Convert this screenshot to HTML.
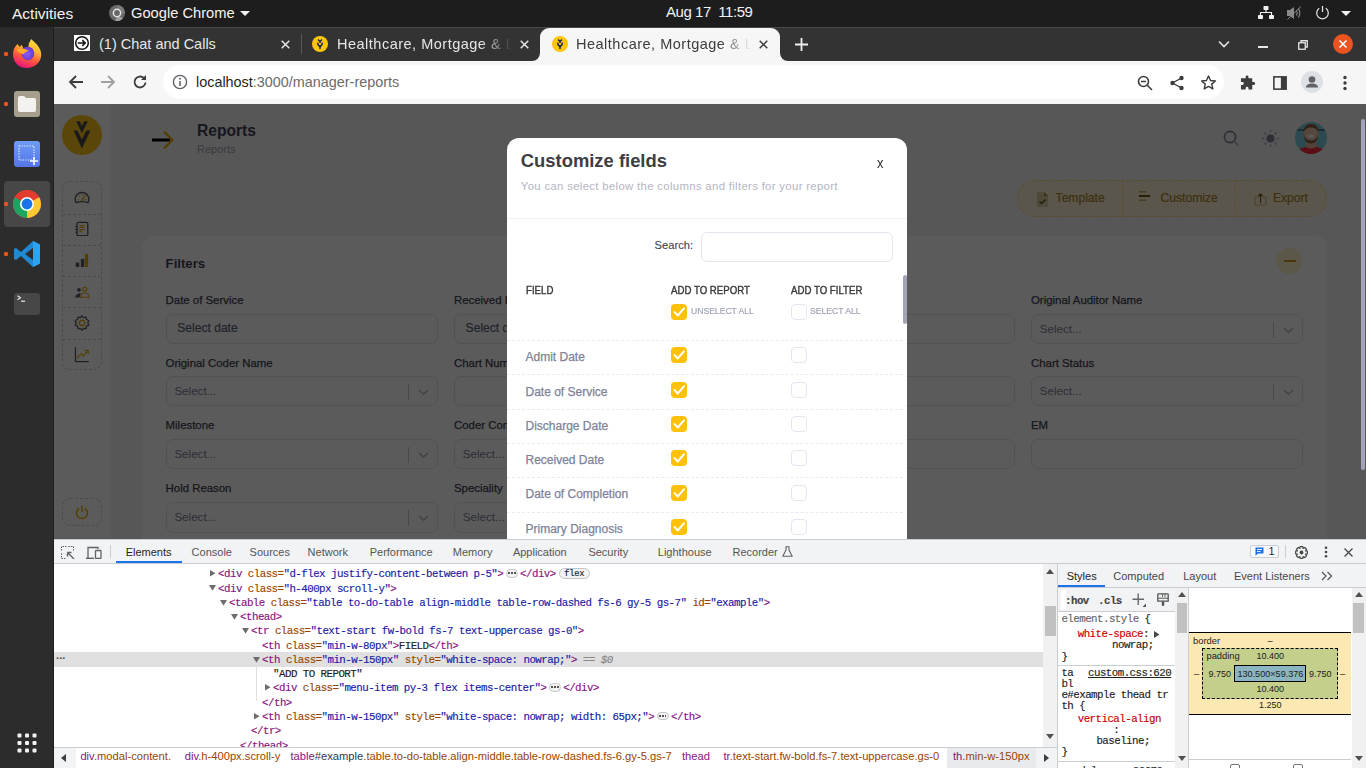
<!DOCTYPE html>
<html><head><meta charset="utf-8">
<style>
*{box-sizing:border-box;margin:0;padding:0}
html,body{width:1366px;height:768px;overflow:hidden;background:#1d1d1d;font-family:"Liberation Sans",sans-serif}
.a{position:absolute}
#topbar{left:0;top:0;width:1366px;height:27px;background:#1d1d1d;color:#fff;font-size:15px}
#dock{left:0;top:27px;width:54px;height:741px;background:#2c2c2c}
#tabs{left:54px;top:27px;width:1312px;height:34px;background:#333}
#toolbar{left:54px;top:61px;width:1312px;height:43px;background:#f6f6f6}
#page{left:54px;top:104px;width:1312px;height:435px;background:#f2f2f2;overflow:hidden}
#overlay{left:0;top:0;width:1312px;height:435px;background:rgba(0,0,0,0.643)}
.tabt{font-size:14.5px}
.tabx{font-size:13px}
.t{position:absolute;line-height:1;white-space:nowrap}
.m{position:absolute;font-family:"Liberation Mono",monospace;font-size:10.8px;letter-spacing:-0.54px;line-height:14px;white-space:nowrap;-webkit-text-stroke:0.15px currentColor}
.m span{-webkit-text-stroke:0.15px currentColor}
.ell{display:inline-block;box-sizing:border-box;width:12.5px;height:8.5px;border:1px solid #c4c4c4;border-radius:5px;background:#f1f3f4;vertical-align:middle;margin:0 2px 0 2.4px;position:relative;top:-1px;line-height:6px;text-align:center;font-size:0}
.ell i{display:inline-block;width:1.8px;height:1.8px;background:#555;margin:0 0.5px;vertical-align:middle}
.badge{display:inline-block;box-sizing:border-box;margin-left:3.2px;width:30.6px;height:11.3px;border:1px solid #c4c4c4;border-radius:6px;background:#f1f3f4;font-size:8.8px;letter-spacing:-0.3px;line-height:11px;text-align:center;color:#222;vertical-align:middle;position:relative;top:-1px}
#dev{left:54px;top:538px;width:1312px;height:230px;background:#fff;border-top:1px solid #cbcdd1}
</style></head><body>
<div id="topbar" class="a">
  <div class="a" style="left:12px;top:5px;font-size:15.5px;color:#f2f2f2">Activities</div>
  <svg class="a" style="left:109px;top:5px" width="16" height="16" viewBox="0 0 16 16"><circle cx="8" cy="8" r="8" fill="#6a6a6a"/><path d="M14 13.3A8 8 0 0 1 6 15.8L9.2 11Z" fill="#a0a0a0"/><path d="M8 0A8 8 0 0 1 15.8 9L12 8Z" fill="#7c7c7c"/><circle cx="8" cy="8" r="4.4" fill="#e6e6e6"/><circle cx="8" cy="8" r="2.9" fill="#666"/></svg>
  <div class="a" style="left:131px;top:4.5px;font-size:14.7px;color:#f2f2f2">Google Chrome</div>
  <svg class="a" style="left:240px;top:11px" width="10" height="5" viewBox="0 0 10 5"><path d="M0 0H10L5 5Z" fill="#f2f2f2"/></svg>
  <div class="a" style="left:666px;top:3px;font-size:15px;letter-spacing:-0.45px;color:#f2f2f2">Aug 17&nbsp; 11:59</div>
  <svg class="a" style="left:1258px;top:6px" width="16" height="13" viewBox="0 0 16 13"><rect x="5.5" y="0" width="5" height="4" rx="0.8" fill="#f2f2f2"/><rect x="0" y="9" width="5" height="4" rx="0.8" fill="#f2f2f2"/><rect x="11" y="9" width="5" height="4" rx="0.8" fill="#f2f2f2"/><path d="M8 4V6.5M2.5 9V6.5H13.5V9" stroke="#f2f2f2" stroke-width="1.1" fill="none"/></svg>
  <svg class="a" style="left:1287px;top:6px" width="16" height="14" viewBox="0 0 16 14"><path d="M0 4H3L7 1V13L3 10H0Z" fill="#8a8a8a"/><path d="M9.5 4.5Q11 7 9.5 9.5M11.5 2.5Q14 7 11.5 11.5" stroke="#8a8a8a" stroke-width="1.1" fill="none"/><path d="M0.5 13.5L14 0.5" stroke="#8a8a8a" stroke-width="1"/></svg>
  <svg class="a" style="left:1315px;top:5px" width="15" height="15" viewBox="0 0 15 15"><path d="M4.2 3.3A5.8 5.8 0 1 0 10.8 3.3" stroke="#eaeaea" stroke-width="1.2" fill="none"/><path d="M7.5 1V7" stroke="#eaeaea" stroke-width="1.2"/></svg>
  <svg class="a" style="left:1341px;top:11px" width="10" height="5" viewBox="0 0 10 5"><path d="M0 0H10L5 5Z" fill="#f2f2f2"/></svg>
</div>
<div id="dock" class="a">
  <div class="a" style="left:4px;top:154px;width:46px;height:46px;border-radius:4px;background:#474747"></div>
  <div class="a" style="left:53px;top:0;width:1px;height:741px;background:#1e1e1e"></div>
  <svg class="a" style="left:3px;top:24px" width="6" height="6"><circle cx="3" cy="3" r="2.2" fill="#e95420"/></svg>
  <svg class="a" style="left:3px;top:74px" width="6" height="6"><circle cx="3" cy="3" r="2.2" fill="#e95420"/></svg>
  <svg class="a" style="left:3px;top:174px" width="6" height="6"><circle cx="3" cy="3" r="2.2" fill="#e95420"/></svg>
  <svg class="a" style="left:3px;top:224px" width="6" height="6"><circle cx="3" cy="3" r="2.2" fill="#e95420"/></svg>
  <!-- firefox -->
  <svg class="a" style="left:12px;top:12px" width="30" height="30" viewBox="0 0 30 30">
    <defs><linearGradient id="ff1" x1="0.75" y1="0" x2="0.35" y2="1"><stop offset="0" stop-color="#ffe640"/><stop offset="0.35" stop-color="#ffb62e"/><stop offset="0.65" stop-color="#ff5a3a"/><stop offset="1" stop-color="#e8127e"/></linearGradient>
    <radialGradient id="ff2" cx="0.45" cy="0.55" r="0.6"><stop offset="0" stop-color="#8a5cf6"/><stop offset="1" stop-color="#6236c8"/></radialGradient></defs>
    <path d="M14.5 29C6.5 29 1 23 1 15.5C1 11 2.5 7.8 5.6 5L7.6 8L9.6 5.7L11.5 9.5L16 8C17 7 16.8 6 16.6 5C17.5 3.5 18.5 1.5 19 0C22 3 25 5 27 8.5C29 11.5 29.2 14 29.2 16C29.2 23 22.5 29 14.5 29Z" fill="url(#ff1)"/>
    <path d="M10.5 9.8C13 7.3 17.5 7 20.5 9.5L21.5 11.5A6.4 6.4 0 1 1 9.6 14Z" fill="url(#ff2)"/>
    <path d="M4.5 11C8 9.2 13 9.5 16.5 11.8C14 12.6 12.6 13.6 12 15.2C9.5 14.8 6.5 13.5 4.5 11Z" fill="#ffab2a"/>
  </svg>
  <!-- files -->
  <svg class="a" style="left:14px;top:64px" width="26" height="26" viewBox="0 0 26 26"><rect x="0" y="0" width="26" height="26" rx="3" fill="#a59f8c"/><path d="M4 7Q4 5 6 5H10L12 7H20Q22 7 22 9V19Q22 21 20 21H6Q4 21 4 19Z" fill="#f4f2ee"/></svg>
  <!-- screenshot -->
  <svg class="a" style="left:14px;top:114px" width="26" height="26" viewBox="0 0 26 26"><defs><linearGradient id="ss" x1="0" y1="0" x2="0" y2="1"><stop offset="0" stop-color="#6d9cf5"/><stop offset="1" stop-color="#5575e8"/></linearGradient></defs><rect width="26" height="26" rx="3" fill="url(#ss)"/><rect x="5" y="5" width="15" height="14" fill="none" stroke="#e6eeff" stroke-width="1.2" stroke-dasharray="1.3 1.3"/><path d="M20 16V24M16 20H24" stroke="#fff" stroke-width="1.6"/></svg>
  <!-- chrome selected bg -->
  <svg class="a" style="left:12px;top:162px" width="30" height="30" viewBox="0 0 30 30">
    <circle cx="15" cy="15" r="14" fill="#db4437"/>
    <path d="M15 15 L27.12 8 A14 14 0 0 1 15 29 Z" fill="#fcc934"/>
    <path d="M15 15 L15 29 A14 14 0 0 1 2.88 8 Z" fill="#1ea362"/>
    <path d="M15 15L2.88 8A14 14 0 0 1 27.12 8Z" fill="#e33b2e"/>
    <circle cx="15" cy="15" r="7" fill="#fff"/><circle cx="15" cy="15" r="5.4" fill="#1a73e8"/>
  </svg>
  <!-- vscode -->
  <svg class="a" style="left:13px;top:213px" width="28" height="28" viewBox="0 0 28 28"><path d="M20 1L27 4.5V23.5L20 27L8 16L3 20L1 19V9L3 8L8 12Z M20 8L12 14L20 20Z" fill="#1f8ad2" fill-rule="evenodd"/><path d="M20 1L27 4.5V23.5L20 27Z" fill="#2aa3f0"/></svg>
  <!-- terminal -->
  <svg class="a" style="left:14px;top:266px" width="26" height="22" viewBox="0 0 26 22"><rect width="26" height="22" rx="3" fill="#474747"/><path d="M3.5 2.8L6.5 4.8L3.5 6.8" stroke="#e8e8e8" stroke-width="1.1" fill="none"/><path d="M7 8.2H11" stroke="#e8e8e8" stroke-width="1.2"/></svg>
  <!-- apps -->
  <svg class="a" style="left:17px;top:706px" width="20" height="20" viewBox="0 0 20 20" fill="#f2f2f2"><rect x="0.5" y="0.5" width="4" height="4" rx="1"/><rect x="8" y="0.5" width="4" height="4" rx="1"/><rect x="15.5" y="0.5" width="4" height="4" rx="1"/><rect x="0.5" y="8" width="4" height="4" rx="1"/><rect x="8" y="8" width="4" height="4" rx="1"/><rect x="15.5" y="8" width="4" height="4" rx="1"/><rect x="0.5" y="15.5" width="4" height="4" rx="1"/><rect x="8" y="15.5" width="4" height="4" rx="1"/><rect x="15.5" y="15.5" width="4" height="4" rx="1"/></svg>
</div>
<div id="tabs" class="a">
  <div class="a" style="left:0;top:0;width:1312px;height:1px;background:#474747"></div>
  <!-- tab 1 -->
  <svg class="a" style="left:20px;top:8px" width="16" height="16" viewBox="0 0 16 16"><rect width="16" height="16" fill="#fff"/><circle cx="8" cy="8" r="6.3" fill="none" stroke="#111" stroke-width="1.5"/><path d="M3.8 8H11.2M8.3 5.1L11.2 8L8.3 10.9" stroke="#111" stroke-width="1.5" fill="none"/></svg>
  <div class="a tabt" style="left:45px;top:9px;color:#e6e6e6">(1) Chat and Calls</div>
  <svg class="a" style="left:227px;top:13px" width="9" height="9" viewBox="0 0 9 9"><path d="M0.7 0.7L8.3 8.3M8.3 0.7L0.7 8.3" stroke="#e6e6e6" stroke-width="1.5"/></svg>
  <div class="a" style="left:247px;top:7px;width:1px;height:20px;background:#5a5a5a"></div>
  <!-- tab 2 -->
  <svg class="a" style="left:258px;top:9px" width="16" height="16" viewBox="0 0 16 16"><circle cx="8" cy="8" r="8" fill="#ffc50a"/><path d="M6.1 3.6L8 5.6L9.9 3.6M8 5V7" stroke="#1d2a58" stroke-width="1.5" fill="none"/><path d="M5.6 6.6Q5.8 9.6 8 10.2Q10.2 9.6 10.4 6.6" stroke="#1d2a58" stroke-width="1.5" fill="none"/><rect x="7.2" y="9.5" width="1.6" height="3.4" fill="#1d2a58"/></svg>
  <div class="a tabt" style="left:283px;top:9px;width:175px;letter-spacing:0.5px;overflow:hidden;white-space:nowrap;color:#e6e6e6;-webkit-mask-image:linear-gradient(90deg,#000 82%,transparent 100%)">Healthcare, Mortgage &amp; Lending</div>
  <svg class="a" style="left:466px;top:13px" width="9" height="9" viewBox="0 0 9 9"><path d="M0.7 0.7L8.3 8.3M8.3 0.7L0.7 8.3" stroke="#e6e6e6" stroke-width="1.5"/></svg>
  <!-- active tab -->
  <div class="a" style="left:486px;top:1px;width:240px;height:33px;background:#f6f6f6;border-radius:9px 9px 0 0"></div>
  <svg class="a" style="left:478px;top:26px" width="8" height="8"><path d="M8 0V8H0A8 8 0 0 0 8 0Z" fill="#f6f6f6"/></svg>
  <svg class="a" style="left:726px;top:26px" width="8" height="8"><path d="M0 0V8H8A8 8 0 0 1 0 0Z" fill="#f6f6f6"/></svg>
  <svg class="a" style="left:498px;top:9px" width="16" height="16" viewBox="0 0 16 16"><circle cx="8" cy="8" r="8" fill="#ffc50a"/><path d="M6.1 3.6L8 5.6L9.9 3.6M8 5V7" stroke="#1d2a58" stroke-width="1.5" fill="none"/><path d="M5.6 6.6Q5.8 9.6 8 10.2Q10.2 9.6 10.4 6.6" stroke="#1d2a58" stroke-width="1.5" fill="none"/><rect x="7.2" y="9.5" width="1.6" height="3.4" fill="#1d2a58"/></svg>
  <div class="a tabt" style="left:522px;top:9px;width:175px;letter-spacing:0.5px;overflow:hidden;white-space:nowrap;color:#3c3c3c;-webkit-mask-image:linear-gradient(90deg,#000 82%,transparent 100%)">Healthcare, Mortgage &amp; Lending</div>
  <svg class="a" style="left:705px;top:13px" width="9" height="9" viewBox="0 0 9 9"><path d="M0.7 0.7L8.3 8.3M8.3 0.7L0.7 8.3" stroke="#3c3c3c" stroke-width="1.5"/></svg>
  <!-- plus -->
  <svg class="a" style="left:741px;top:11px" width="13" height="13" viewBox="0 0 13 13"><path d="M6.5 0V13M0 6.5H13" stroke="#f0f0f0" stroke-width="1.8"/></svg>
  <!-- right controls -->
  <svg class="a" style="left:1164px;top:13px" width="12" height="8" viewBox="0 0 12 8"><path d="M1 1.5L6 6.5L11 1.5" stroke="#e6e6e6" stroke-width="1.6" fill="none"/></svg>
  <div class="a" style="left:1204px;top:19px;width:10px;height:1.5px;background:#e6e6e6"></div>
  <svg class="a" style="left:1244px;top:13px" width="10" height="10" viewBox="0 0 10 10"><rect x="0.75" y="2.75" width="6.5" height="6.5" fill="none" stroke="#e6e6e6" stroke-width="1.3"/><path d="M3 2.5V0.75H9.25V7H7.5" fill="none" stroke="#e6e6e6" stroke-width="1.3"/></svg>
  <svg class="a" style="left:1279px;top:7px" width="20" height="20" viewBox="0 0 20 20"><circle cx="10" cy="10" r="10" fill="#e95420"/><path d="M6.5 6.5L13.5 13.5M13.5 6.5L6.5 13.5" stroke="#fff" stroke-width="1.6"/></svg>
</div>
<div id="toolbar" class="a">
  <svg class="a" style="left:14px;top:13px" width="16" height="16" viewBox="0 0 16 16"><path d="M15 8H2M8 2L2 8L8 14" stroke="#3c3c3c" stroke-width="1.8" fill="none"/></svg>
  <svg class="a" style="left:46px;top:13px" width="16" height="16" viewBox="0 0 16 16"><path d="M1 8H14M8 2L14 8L8 14" stroke="#a0a0a0" stroke-width="1.8" fill="none"/></svg>
  <svg class="a" style="left:78px;top:13px" width="16" height="16" viewBox="0 0 16 16"><path d="M13.5 8.5A5.5 5.5 0 1 1 11.8 4" stroke="#3c3c3c" stroke-width="1.8" fill="none"/><path d="M14 1V6H9Z" fill="#3c3c3c"/></svg>
  <div class="a" style="left:109px;top:4px;width:1061px;height:34px;background:#fff;border-radius:17px"></div>
  <svg class="a" style="left:118px;top:13px" width="16" height="16" viewBox="0 0 16 16"><circle cx="8" cy="8" r="6.6" fill="none" stroke="#5f6368" stroke-width="1.4"/><path d="M8 7V12" stroke="#5f6368" stroke-width="1.6"/><circle cx="8" cy="4.8" r="1" fill="#5f6368"/></svg>
  <div class="a" style="left:142px;top:13.2px;font-size:14.4px;color:#1f1f1f;white-space:nowrap">localhost<span style="color:#6b6b6b">:3000/manager-reports</span></div>
  <svg class="a" style="left:1083px;top:14px" width="16" height="16" viewBox="0 0 16 16"><circle cx="6.5" cy="6.5" r="5" fill="none" stroke="#3c3c3c" stroke-width="1.6"/><path d="M10.3 10.3L15 15M4 6.5H9" stroke="#3c3c3c" stroke-width="1.6"/></svg>
  <svg class="a" style="left:1115px;top:14px" width="16" height="16" viewBox="0 0 16 16"><circle cx="12.5" cy="3" r="2.2" fill="#3c3c3c"/><circle cx="3.5" cy="8" r="2.2" fill="#3c3c3c"/><circle cx="12.5" cy="13" r="2.2" fill="#3c3c3c"/><path d="M12.5 3L3.5 8L12.5 13" stroke="#3c3c3c" stroke-width="1.4" fill="none"/></svg>
  <svg class="a" style="left:1146px;top:13px" width="17" height="18" viewBox="0 0 18 18"><path d="M9 1.5L11.2 6.4L16.3 6.8L12.4 10.2L13.6 15.3L9 12.6L4.4 15.3L5.6 10.2L1.7 6.8L6.8 6.4Z" fill="none" stroke="#3c3c3c" stroke-width="1.5" stroke-linejoin="round"/></svg>
  <svg class="a" style="left:1186px;top:14px" width="16" height="17" viewBox="0 0 17 17"><path d="M6 1.5Q6 0 7.5 0Q9 0 9 1.5V3H13V7H14.5Q16 7 16 8.5Q16 10 14.5 10H13V15H9V13.5Q9 12 7.5 12Q6 12 6 13.5V15H1V10H2.5Q4 10 4 8.5Q4 7 2.5 7H1V3H6Z" fill="#3c3c3c"/></svg>
  <svg class="a" style="left:1219px;top:14px" width="14" height="16" viewBox="0 0 16 16"><rect x="1" y="1" width="14" height="14" fill="none" stroke="#3c3c3c" stroke-width="1.8"/><rect x="9" y="1" width="6" height="14" fill="#3c3c3c"/></svg>
  <svg class="a" style="left:1247px;top:10px" width="22" height="22" viewBox="0 0 22 22"><circle cx="11" cy="11" r="11" fill="#dde1e6"/><circle cx="11" cy="8.5" r="3.3" fill="#5f6368"/><path d="M4.8 16.5Q5.5 12.5 11 12.5Q16.5 12.5 17.2 16.5Z" fill="#5f6368"/></svg>
  <svg class="a" style="left:1289px;top:14px" width="4" height="16" viewBox="0 0 4 16"><circle cx="2" cy="2.5" r="1.7" fill="#3c3c3c"/><circle cx="2" cy="8" r="1.7" fill="#3c3c3c"/><circle cx="2" cy="13.5" r="1.7" fill="#3c3c3c"/></svg>
</div>
<div id="page" class="a">
<div class="a" style="left:0.00px;top:0.00px;width:56.00px;height:434.00px;background:#fff"></div>
<div class="a" style="left:56.00px;top:0.00px;width:1256.00px;height:434.00px;background:#f4f4f4"></div>
<svg class="a" style="left:8.00px;top:11.00px" width="40" height="40" viewBox="0 0 40 40"><circle cx="20" cy="20" r="20" fill="#ffc41a"/><path d="M14.2 6.3H17.8L19.9 11.1L22.25 6.3H25.8L19.9 18.3Z" fill="#4a4a4a"/><path d="M11.5 15.6H15.4L19.9 24.5L24.3 15.6H28.5L19.9 33.5Z" fill="#4a4a4a"/></svg>
<div class="a" style="left:8.00px;top:77.00px;width:40.00px;height:189.00px;border:1px dashed #cfd2da;border-radius:8px"></div>
<div class="a" style="left:9.00px;top:109.50px;width:38.00px;height:0.00px;border-top:1px dashed #cfd2da"></div>
<div class="a" style="left:9.00px;top:140.78px;width:38.00px;height:0.00px;border-top:1px dashed #cfd2da"></div>
<div class="a" style="left:9.00px;top:172.06px;width:38.00px;height:0.00px;border-top:1px dashed #cfd2da"></div>
<div class="a" style="left:9.00px;top:203.34px;width:38.00px;height:0.00px;border-top:1px dashed #cfd2da"></div>
<div class="a" style="left:9.00px;top:234.62px;width:38.00px;height:0.00px;border-top:1px dashed #cfd2da"></div>
<svg class="a" style="left:20.00px;top:86.00px" width="16" height="14" viewBox="0 0 16 14"><path d="M2.1 12.7A6.8 6.8 0 1 1 13.9 12.7Q8 10.6 2.1 12.7Z" fill="none" stroke="#5a5d6a" stroke-width="1.4" stroke-linejoin="round"/><path d="M7.6 10.6L10.9 5.6" stroke="#e8ae00" stroke-width="1.5" stroke-linecap="round"/><path d="M3.6 9.7H5.2M10.8 9.7H12.4M8 4.1V5.3M5 5.4L5.9 6.3" stroke="#e8ae00" stroke-width="1.1"/></svg>
<svg class="a" style="left:21.00px;top:116.00px" width="14" height="16" viewBox="0 0 14 16"><rect x="2" y="2.3" width="10.8" height="13.4" rx="1.5" fill="none" stroke="#5a5d6a" stroke-width="1.3"/><path d="M0.3 6.5H3M0.3 9.4H3M0.3 12.2H3" stroke="#5a5d6a" stroke-width="1.1"/><path d="M4.4 5.8H9.5M4.4 7.4H9.5M4.4 9.6H9.5M4.4 11.6H7" stroke="#e8ae00" stroke-width="1.1"/></svg>
<svg class="a" style="left:21.00px;top:149.00px" width="14" height="14" viewBox="0 0 14 14"><rect x="0.8" y="9.6" width="3.4" height="4.4" fill="#5a5d6a"/><rect x="5.9" y="6" width="3.4" height="8" fill="#5a5d6a"/><rect x="9.9" y="1" width="3.2" height="13" fill="#e8ae00"/></svg>
<svg class="a" style="left:20.00px;top:181.00px" width="17" height="14" viewBox="0 0 17 14"><circle cx="5" cy="4.8" r="1.9" fill="#5a5d6a"/><path d="M1 12.4Q1.8 8.4 6.8 8.2L5.6 12.4Z" fill="#5a5d6a"/><circle cx="10.7" cy="4.3" r="2.1" fill="none" stroke="#e8ae00" stroke-width="1.1"/><path d="M6.6 12.2Q6.6 8 10.8 8Q15 8 15 12.2Z" fill="none" stroke="#e8ae00" stroke-width="1.1"/></svg>
<svg class="a" style="left:20.00px;top:211.00px" width="16" height="16" viewBox="0 0 16 16"><path d="M8 0.8L9.6 2.6L12 2.2L12.5 4.5L14.8 5.5L13.8 7.8L14.8 10.2L12.5 11.2L12 13.6L9.6 13.3L8 15.2L6.4 13.3L4 13.6L3.5 11.2L1.2 10.2L2.2 7.8L1.2 5.5L3.5 4.5L4 2.2L6.4 2.6Z" fill="none" stroke="#5a5d6a" stroke-width="1.3" stroke-linejoin="round"/><circle cx="8" cy="8" r="2.7" fill="none" stroke="#e8ae00" stroke-width="1.4"/></svg>
<svg class="a" style="left:20.00px;top:242.00px" width="16" height="17" viewBox="0 0 16 17"><path d="M1.5 1V15.6H14.8" stroke="#5a5d6a" stroke-width="1.3" fill="none"/><path d="M3 12.2L7.2 7.8L9.5 10.2L13.6 5" stroke="#e8ae00" stroke-width="1.2" fill="none"/><path d="M10.6 4.4H14.2V8" stroke="#e8ae00" stroke-width="1.2" fill="none"/></svg>
<div class="a" style="left:8.00px;top:394.00px;width:40.00px;height:28.00px;border:1px dashed #cfd2da;border-radius:8px"></div>
<svg class="a" style="left:21.00px;top:400.50px" width="14" height="15" viewBox="0 0 14 15"><path d="M4 3.5A5.5 5.5 0 1 0 10 3.5" stroke="#e8ae00" stroke-width="1.5" fill="none"/><path d="M7 0.5V7" stroke="#e8ae00" stroke-width="1.5"/></svg>
<svg class="a" style="left:96.00px;top:25.00px" width="24" height="22" viewBox="0 0 24 22"><path d="M2 11H20" stroke="#000" stroke-width="3"/><path d="M14 2.5L22.5 11L14 19.5" stroke="#e8ae00" stroke-width="2.2" fill="none"/></svg>
<div class="t" style="left:143.00px;top:18.59px;font-size:15.6px;font-weight:700;color:#3f4254">Reports</div>
<div class="t" style="left:143.00px;top:40.49px;font-size:11px;color:#a1a5b7">Reports</div>
<svg class="a" style="left:1169.00px;top:26.00px" width="17" height="17" viewBox="0 0 17 17"><circle cx="7" cy="7" r="5.6" fill="none" stroke="#7e8299" stroke-width="1.6"/><path d="M11 11L15.5 15.5" stroke="#b5b5c3" stroke-width="1.8"/></svg>
<svg class="a" style="left:1208.00px;top:26.00px" width="17" height="17" viewBox="0 0 17 17"><circle cx="8.5" cy="8.5" r="4" fill="#7e8299"/><rect x="7.8" y="0" width="1.4" height="2.4" fill="#a1a5b7" transform="rotate(0 8.5 8.5)"/><rect x="7.8" y="0" width="1.4" height="2.4" fill="#a1a5b7" transform="rotate(45 8.5 8.5)"/><rect x="7.8" y="0" width="1.4" height="2.4" fill="#a1a5b7" transform="rotate(90 8.5 8.5)"/><rect x="7.8" y="0" width="1.4" height="2.4" fill="#a1a5b7" transform="rotate(135 8.5 8.5)"/><rect x="7.8" y="0" width="1.4" height="2.4" fill="#a1a5b7" transform="rotate(180 8.5 8.5)"/><rect x="7.8" y="0" width="1.4" height="2.4" fill="#a1a5b7" transform="rotate(225 8.5 8.5)"/><rect x="7.8" y="0" width="1.4" height="2.4" fill="#a1a5b7" transform="rotate(270 8.5 8.5)"/><rect x="7.8" y="0" width="1.4" height="2.4" fill="#a1a5b7" transform="rotate(315 8.5 8.5)"/></svg>
<svg class="a" style="left:1241.00px;top:18.00px" width="32" height="32" viewBox="0 0 32 32"><defs><clipPath id="av"><circle cx="16" cy="16" r="16"/></clipPath></defs><g clip-path="url(#av)"><rect width="32" height="32" fill="#7dd0dc"/><path d="M0 7.5H32V8.6H0Z" fill="#1f3538"/><path d="M11 18H21V28H11Z" fill="#e9b79a"/><ellipse cx="16" cy="11.5" rx="7.3" ry="9.6" fill="#f1c7ad"/><path d="M8.6 11Q8.6 2 16 2Q23.5 2 23.5 11Q22 5.5 16 5.5Q10 5.5 8.6 11Z" fill="#8a5a3c"/><path d="M8.8 12Q9 21.5 16 21.5Q23 21.5 23.2 12Q22 18 16 18.5Q10 18 8.8 12Z" fill="#8d6248"/><ellipse cx="16" cy="14" rx="3" ry="1.6" fill="#fff"/><path d="M1 32Q3 25.5 11 25Q16 28 21 25Q29 25.5 31 32Z" fill="#ff2a3a"/></g></svg>
<div class="a" style="left:963.00px;top:76.00px;width:310.00px;height:37.00px;background:#fff0d2;border:1px dashed #f7d67a;border-radius:19px"></div>
<div class="a" style="left:1067.50px;top:76.00px;width:0.00px;height:37.00px;border-left:1px dashed #f7d67a"></div>
<div class="a" style="left:1180.60px;top:76.00px;width:0.00px;height:37.00px;border-left:1px dashed #f7d67a"></div>
<svg class="a" style="left:983.00px;top:88.00px" width="11" height="15" viewBox="0 0 11 15"><path d="M0 0H7L11 4V15H0Z" fill="#d9cfa6"/><path d="M7 0L11 4H7Z" fill="#a08a2c"/><path d="M2.5 9.5L4.5 11.5L8.5 7.5" stroke="#5a4b10" stroke-width="1.3" fill="none"/></svg>
<div class="t" style="left:1001.60px;top:88.26px;font-size:12.1px;color:#a88626;-webkit-text-stroke:0.2px #a88626">Template</div>
<svg class="a" style="left:1085.00px;top:87.00px" width="11" height="11" viewBox="0 0 11 11"><rect x="0" y="0" width="7" height="1.6" fill="#bfae6a"/><rect x="0" y="4" width="11" height="2" fill="#6b5812"/><rect x="0" y="8.5" width="7" height="1.6" fill="#bfae6a"/></svg>
<div class="t" style="left:1106.60px;top:88.26px;font-size:12.1px;color:#a88626;-webkit-text-stroke:0.2px #a88626">Customize</div>
<svg class="a" style="left:1199.50px;top:88.50px" width="13" height="13" viewBox="0 0 13 13"><path d="M4.5 4H2Q1 4 1 5V11Q1 12 2 12H11Q12 12 12 11V5Q12 4 11 4H8.5" stroke="#cdb880" stroke-width="1.1" fill="none"/><path d="M6.5 10V1.2M4.3 3.3L6.5 1L8.7 3.3" stroke="#7a6420" stroke-width="1.3" fill="none"/></svg>
<div class="t" style="left:1219.00px;top:88.26px;font-size:12.1px;color:#a88626;-webkit-text-stroke:0.2px #a88626">Export</div>
<div class="a" style="left:88.00px;top:132.00px;width:1185.00px;height:320.00px;background:#fff;border-radius:12px"></div>
<div class="t" style="left:111.60px;top:153.13px;font-size:13.2px;font-weight:700;color:#3f4254">Filters</div>
<div class="a" style="left:1222.40px;top:144.00px;width:26.00px;height:26.00px;background:#fff3cc;border-radius:13px"></div>
<div class="a" style="left:1229.50px;top:156.00px;width:12.00px;height:2.00px;background:#c99a1c"></div>
<div class="t" style="left:111.60px;top:190.75px;font-size:11.4px;color:#3f4254;-webkit-text-stroke:0.25px #3f4254">Date of Service</div>
<div class="a" style="left:111.60px;top:210.00px;width:272.00px;height:30.20px;border:1px solid #e4e6ef;border-radius:7px;background:#fff"></div>
<div class="t" style="left:123.20px;top:217.56px;font-size:12.1px;color:#5e6278;-webkit-text-stroke:0.2px #5e6278">Select date</div>
<div class="t" style="left:400.00px;top:190.75px;font-size:11.4px;color:#3f4254;-webkit-text-stroke:0.25px #3f4254">Received Date</div>
<div class="a" style="left:400.00px;top:210.00px;width:272.00px;height:30.20px;border:1px solid #e4e6ef;border-radius:7px;background:#fff"></div>
<div class="t" style="left:411.60px;top:217.56px;font-size:12.1px;color:#5e6278;-webkit-text-stroke:0.2px #5e6278">Select date</div>
<div class="a" style="left:688.50px;top:210.00px;width:272.00px;height:30.20px;border:1px solid #e4e6ef;border-radius:7px;background:#fff"></div>
<div class="t" style="left:977.00px;top:190.75px;font-size:11.4px;color:#3f4254;-webkit-text-stroke:0.25px #3f4254">Original Auditor Name</div>
<div class="a" style="left:977.00px;top:210.00px;width:272.00px;height:30.20px;border:1px solid #e4e6ef;border-radius:7px;background:#fff"></div>
<div class="t" style="left:985.80px;top:218.98px;font-size:11.6px;color:#7e8299">Select...</div>
<div class="a" style="left:1219.30px;top:217.70px;width:1.00px;height:16.00px;background:#cccccc"></div>
<svg class="a" style="left:1229.30px;top:222.50px" width="11" height="6" viewBox="0 0 11 6"><path d="M1 1L5.5 5L10 1" stroke="#b9b9b9" stroke-width="1.6" fill="none"/></svg>
<div class="t" style="left:111.60px;top:253.55px;font-size:11.4px;color:#3f4254;-webkit-text-stroke:0.25px #3f4254">Original Coder Name</div>
<div class="a" style="left:111.60px;top:272.30px;width:272.00px;height:30.20px;border:1px solid #e4e6ef;border-radius:7px;background:#fff"></div>
<div class="t" style="left:120.40px;top:281.28px;font-size:11.6px;color:#7e8299">Select...</div>
<div class="a" style="left:353.90px;top:280.00px;width:1.00px;height:16.00px;background:#cccccc"></div>
<svg class="a" style="left:363.90px;top:284.80px" width="11" height="6" viewBox="0 0 11 6"><path d="M1 1L5.5 5L10 1" stroke="#b9b9b9" stroke-width="1.6" fill="none"/></svg>
<div class="t" style="left:400.00px;top:253.55px;font-size:11.4px;color:#3f4254;-webkit-text-stroke:0.25px #3f4254">Chart Number</div>
<div class="a" style="left:400.00px;top:272.30px;width:272.00px;height:30.20px;border:1px solid #e4e6ef;border-radius:7px;background:#fff"></div>
<div class="a" style="left:688.50px;top:272.30px;width:272.00px;height:30.20px;border:1px solid #e4e6ef;border-radius:7px;background:#fff"></div>
<div class="t" style="left:977.00px;top:253.55px;font-size:11.4px;color:#3f4254;-webkit-text-stroke:0.25px #3f4254">Chart Status</div>
<div class="a" style="left:977.00px;top:272.30px;width:272.00px;height:30.20px;border:1px solid #e4e6ef;border-radius:7px;background:#fff"></div>
<div class="t" style="left:985.80px;top:281.28px;font-size:11.6px;color:#7e8299">Select...</div>
<div class="a" style="left:1219.30px;top:280.00px;width:1.00px;height:16.00px;background:#cccccc"></div>
<svg class="a" style="left:1229.30px;top:284.80px" width="11" height="6" viewBox="0 0 11 6"><path d="M1 1L5.5 5L10 1" stroke="#b9b9b9" stroke-width="1.6" fill="none"/></svg>
<div class="t" style="left:111.60px;top:316.15px;font-size:11.4px;color:#3f4254;-webkit-text-stroke:0.25px #3f4254">Milestone</div>
<div class="a" style="left:111.60px;top:335.30px;width:272.00px;height:30.20px;border:1px solid #e4e6ef;border-radius:7px;background:#fff"></div>
<div class="t" style="left:120.40px;top:344.28px;font-size:11.6px;color:#7e8299">Select...</div>
<div class="a" style="left:353.90px;top:343.00px;width:1.00px;height:16.00px;background:#cccccc"></div>
<svg class="a" style="left:363.90px;top:347.80px" width="11" height="6" viewBox="0 0 11 6"><path d="M1 1L5.5 5L10 1" stroke="#b9b9b9" stroke-width="1.6" fill="none"/></svg>
<div class="t" style="left:400.00px;top:316.15px;font-size:11.4px;color:#3f4254;-webkit-text-stroke:0.25px #3f4254">Coder Comments</div>
<div class="a" style="left:400.00px;top:335.30px;width:272.00px;height:30.20px;border:1px solid #e4e6ef;border-radius:7px;background:#fff"></div>
<div class="t" style="left:408.80px;top:344.28px;font-size:11.6px;color:#7e8299">Select...</div>
<div class="a" style="left:642.30px;top:343.00px;width:1.00px;height:16.00px;background:#cccccc"></div>
<svg class="a" style="left:652.30px;top:347.80px" width="11" height="6" viewBox="0 0 11 6"><path d="M1 1L5.5 5L10 1" stroke="#b9b9b9" stroke-width="1.6" fill="none"/></svg>
<div class="a" style="left:688.50px;top:335.30px;width:272.00px;height:30.20px;border:1px solid #e4e6ef;border-radius:7px;background:#fff"></div>
<div class="t" style="left:977.00px;top:316.15px;font-size:11.4px;color:#3f4254;-webkit-text-stroke:0.25px #3f4254">EM</div>
<div class="a" style="left:977.00px;top:335.30px;width:272.00px;height:30.20px;border:1px solid #e4e6ef;border-radius:7px;background:#fff"></div>
<div class="t" style="left:111.60px;top:378.65px;font-size:11.4px;color:#3f4254;-webkit-text-stroke:0.25px #3f4254">Hold Reason</div>
<div class="a" style="left:111.60px;top:398.40px;width:272.00px;height:30.20px;border:1px solid #e4e6ef;border-radius:7px;background:#fff"></div>
<div class="t" style="left:120.40px;top:407.38px;font-size:11.6px;color:#7e8299">Select...</div>
<div class="a" style="left:353.90px;top:406.10px;width:1.00px;height:16.00px;background:#cccccc"></div>
<svg class="a" style="left:363.90px;top:410.90px" width="11" height="6" viewBox="0 0 11 6"><path d="M1 1L5.5 5L10 1" stroke="#b9b9b9" stroke-width="1.6" fill="none"/></svg>
<div class="t" style="left:400.00px;top:378.65px;font-size:11.4px;color:#3f4254;-webkit-text-stroke:0.25px #3f4254">Speciality</div>
<div class="a" style="left:400.00px;top:398.40px;width:272.00px;height:30.20px;border:1px solid #e4e6ef;border-radius:7px;background:#fff"></div>
<div class="t" style="left:408.80px;top:407.38px;font-size:11.6px;color:#7e8299">Select...</div>
<div class="a" style="left:642.30px;top:406.10px;width:1.00px;height:16.00px;background:#cccccc"></div>
<svg class="a" style="left:652.30px;top:410.90px" width="11" height="6" viewBox="0 0 11 6"><path d="M1 1L5.5 5L10 1" stroke="#b9b9b9" stroke-width="1.6" fill="none"/></svg>
<div id="overlay" class="a"></div>
<div class="a" style="left:1307.00px;top:15.00px;width:4.00px;height:351.00px;background:#a1a5b7;border-radius:2px"></div>
</div>
<!--MODAL-->
<div class="a" style="left:0;top:0;width:1366px;height:539px;overflow:hidden">
<div class="a" style="left:507.00px;top:138.00px;width:400.00px;height:440.00px;background:#fff;border-radius:12px"></div>
<div class="t" style="left:520.80px;top:152.42px;font-size:18.4px;font-weight:700;color:#3d3d42">Customize fields</div>
<div class="t" style="left:520.80px;top:180.95px;font-size:11.4px;color:#b5b5c3;letter-spacing:0.31px">You can select below the columns and filters for your report</div>
<div class="t" style="left:876.80px;top:155.03px;font-size:15.2px;color:#333;transform:scaleX(0.85);transform-origin:0 0">x</div>
<div class="a" style="left:507.00px;top:218.00px;width:400.00px;height:1.00px;background:#eff2f5"></div>
<div class="t" style="left:654.60px;top:239.52px;font-size:11.2px;color:#3f4254;-webkit-text-stroke:0.1px #3f4254">Search:</div>
<div class="a" style="left:701.00px;top:232.40px;width:192.40px;height:29.20px;border:1px solid #e4e6ef;border-radius:6px"></div>
<div class="t" style="left:525.50px;top:286.20px;font-size:10.4px;color:#3a3a3a;-webkit-text-stroke:0.4px #3a3a3a;transform:scaleX(0.93);transform-origin:0 0">FIELD</div>
<div class="t" style="left:671.00px;top:286.20px;font-size:10.4px;color:#3a3a3a;-webkit-text-stroke:0.4px #3a3a3a;transform:scaleX(0.93);transform-origin:0 0">ADD TO REPORT</div>
<div class="t" style="left:791.30px;top:286.20px;font-size:10.4px;color:#3a3a3a;-webkit-text-stroke:0.4px #3a3a3a;transform:scaleX(0.93);transform-origin:0 0">ADD TO FILTER</div>
<svg class="a" style="left:671.00px;top:304.00px" width="16" height="16" viewBox="0 0 16 16"><rect width="16" height="16" rx="4" fill="#ffc107"/><path d="M3.6 8.1L6.7 11.5L12.9 4.3" stroke="#fff" stroke-width="2" fill="none" stroke-linecap="round" stroke-linejoin="round"/></svg>
<div class="a" style="left:791.00px;top:304.00px;width:16.00px;height:16.00px;border:1px solid #e4e6ef;border-radius:4px;background:#fff"></div>
<div class="t" style="left:690.60px;top:305.79px;font-size:9.7px;color:#a1a5b7;-webkit-text-stroke:0.2px #a1a5b7;transform:scaleX(0.887);transform-origin:0 0">UNSELECT ALL</div>
<div class="t" style="left:810.30px;top:305.79px;font-size:9.7px;color:#a1a5b7;-webkit-text-stroke:0.2px #a1a5b7;transform:scaleX(0.887);transform-origin:0 0">SELECT ALL</div>
<div class="a" style="left:507.00px;top:339.60px;width:396.00px;height:0.00px;border-top:1px dashed #e9ebf1"></div>
<div class="t" style="left:525.50px;top:350.84px;font-size:12px;color:#7e8299;-webkit-text-stroke:0.25px #7e8299">Admit Date</div>
<svg class="a" style="left:671.00px;top:347.40px" width="16" height="16" viewBox="0 0 16 16"><rect width="16" height="16" rx="4" fill="#ffc107"/><path d="M3.6 8.1L6.7 11.5L12.9 4.3" stroke="#fff" stroke-width="2" fill="none" stroke-linecap="round" stroke-linejoin="round"/></svg>
<div class="a" style="left:791.00px;top:347.40px;width:16.00px;height:16.00px;border:1px solid #e4e6ef;border-radius:4px;background:#fff"></div>
<div class="a" style="left:507.00px;top:374.40px;width:396.00px;height:0.00px;border-top:1px dashed #e9ebf1"></div>
<div class="t" style="left:525.50px;top:385.64px;font-size:12px;color:#7e8299;-webkit-text-stroke:0.25px #7e8299">Date of Service</div>
<svg class="a" style="left:671.00px;top:382.20px" width="16" height="16" viewBox="0 0 16 16"><rect width="16" height="16" rx="4" fill="#ffc107"/><path d="M3.6 8.1L6.7 11.5L12.9 4.3" stroke="#fff" stroke-width="2" fill="none" stroke-linecap="round" stroke-linejoin="round"/></svg>
<div class="a" style="left:791.00px;top:382.20px;width:16.00px;height:16.00px;border:1px solid #e4e6ef;border-radius:4px;background:#fff"></div>
<div class="a" style="left:507.00px;top:408.60px;width:396.00px;height:0.00px;border-top:1px dashed #e9ebf1"></div>
<div class="t" style="left:525.50px;top:419.84px;font-size:12px;color:#7e8299;-webkit-text-stroke:0.25px #7e8299">Discharge Date</div>
<svg class="a" style="left:671.00px;top:416.40px" width="16" height="16" viewBox="0 0 16 16"><rect width="16" height="16" rx="4" fill="#ffc107"/><path d="M3.6 8.1L6.7 11.5L12.9 4.3" stroke="#fff" stroke-width="2" fill="none" stroke-linecap="round" stroke-linejoin="round"/></svg>
<div class="a" style="left:791.00px;top:416.40px;width:16.00px;height:16.00px;border:1px solid #e4e6ef;border-radius:4px;background:#fff"></div>
<div class="a" style="left:507.00px;top:442.50px;width:396.00px;height:0.00px;border-top:1px dashed #e9ebf1"></div>
<div class="t" style="left:525.50px;top:453.74px;font-size:12px;color:#7e8299;-webkit-text-stroke:0.25px #7e8299">Received Date</div>
<svg class="a" style="left:671.00px;top:450.30px" width="16" height="16" viewBox="0 0 16 16"><rect width="16" height="16" rx="4" fill="#ffc107"/><path d="M3.6 8.1L6.7 11.5L12.9 4.3" stroke="#fff" stroke-width="2" fill="none" stroke-linecap="round" stroke-linejoin="round"/></svg>
<div class="a" style="left:791.00px;top:450.30px;width:16.00px;height:16.00px;border:1px solid #e4e6ef;border-radius:4px;background:#fff"></div>
<div class="a" style="left:507.00px;top:477.00px;width:396.00px;height:0.00px;border-top:1px dashed #e9ebf1"></div>
<div class="t" style="left:525.50px;top:488.24px;font-size:12px;color:#7e8299;-webkit-text-stroke:0.25px #7e8299">Date of Completion</div>
<svg class="a" style="left:671.00px;top:484.80px" width="16" height="16" viewBox="0 0 16 16"><rect width="16" height="16" rx="4" fill="#ffc107"/><path d="M3.6 8.1L6.7 11.5L12.9 4.3" stroke="#fff" stroke-width="2" fill="none" stroke-linecap="round" stroke-linejoin="round"/></svg>
<div class="a" style="left:791.00px;top:484.80px;width:16.00px;height:16.00px;border:1px solid #e4e6ef;border-radius:4px;background:#fff"></div>
<div class="a" style="left:507.00px;top:511.60px;width:396.00px;height:0.00px;border-top:1px dashed #e9ebf1"></div>
<div class="t" style="left:525.50px;top:522.84px;font-size:12px;color:#7e8299;-webkit-text-stroke:0.25px #7e8299">Primary Diagnosis</div>
<svg class="a" style="left:671.00px;top:519.40px" width="16" height="16" viewBox="0 0 16 16"><rect width="16" height="16" rx="4" fill="#ffc107"/><path d="M3.6 8.1L6.7 11.5L12.9 4.3" stroke="#fff" stroke-width="2" fill="none" stroke-linecap="round" stroke-linejoin="round"/></svg>
<div class="a" style="left:791.00px;top:519.40px;width:16.00px;height:16.00px;border:1px solid #e4e6ef;border-radius:4px;background:#fff"></div>
<div class="a" style="left:902.80px;top:275.40px;width:3.80px;height:48.60px;background:#a1a5b7;border-radius:2px"></div>
</div>
<!--/MODAL-->
<div id="devwrap">
<div class="a" style="left:54.00px;top:539.00px;width:1312.00px;height:229.00px;background:#fff"></div>
<div class="a" style="left:54.00px;top:539.00px;width:1312.00px;height:1.00px;background:#cacdd1"></div>
<div class="a" style="left:54.00px;top:540.00px;width:1312.00px;height:23.00px;background:#f1f3f4"></div>
<div class="a" style="left:54.00px;top:563.00px;width:1312.00px;height:1.00px;background:#cacdd1"></div>
<svg class="a" style="left:61.00px;top:546.00px" width="14" height="13" viewBox="0 0 14 13"><path d="M5.5 0.5H0.5V5.5M0.5 7.5V12.5H5.5M7.5 0.5H12.5V5.5" stroke="#5f6368" stroke-width="1" stroke-dasharray="1.5 1" fill="none"/><path d="M6.5 6.5L13 13M6.5 6.5H10.5M6.5 6.5V10.5" stroke="#5f6368" stroke-width="1.4" fill="none"/></svg>
<svg class="a" style="left:86.00px;top:546.00px" width="16" height="13" viewBox="0 0 16 13"><path d="M2 12V1.5H12V3" stroke="#5f6368" stroke-width="1.3" fill="none"/><path d="M0 12.3H8" stroke="#5f6368" stroke-width="1.4"/><rect x="9.5" y="4.5" width="5.5" height="8" rx="0.8" fill="none" stroke="#5f6368" stroke-width="1.3"/></svg>
<div class="a" style="left:110.00px;top:545.00px;width:1.00px;height:13.00px;background:#cacdd1"></div>
<div class="t" style="left:125.70px;top:546.89px;font-size:11px;color:#1f1f1f">Elements</div>
<div class="t" style="left:191.60px;top:546.89px;font-size:11px;color:#555">Console</div>
<div class="t" style="left:249.60px;top:546.89px;font-size:11px;color:#555">Sources</div>
<div class="t" style="left:307.60px;top:546.89px;font-size:11px;color:#555">Network</div>
<div class="t" style="left:369.70px;top:546.89px;font-size:11px;color:#555">Performance</div>
<div class="t" style="left:452.80px;top:546.89px;font-size:11px;color:#555">Memory</div>
<div class="t" style="left:512.90px;top:546.89px;font-size:11px;color:#555">Application</div>
<div class="t" style="left:588.40px;top:546.89px;font-size:11px;color:#555">Security</div>
<div class="t" style="left:657.80px;top:546.89px;font-size:11px;color:#555">Lighthouse</div>
<div class="t" style="left:732.50px;top:546.89px;font-size:11px;color:#555">Recorder</div>
<svg class="a" style="left:781.50px;top:546.00px" width="11" height="11" viewBox="0 0 11 11"><path d="M3.5 0.7H7.5M4 0.7V4L0.8 10.2H10.2L7 4V0.7" stroke="#5f6368" stroke-width="1.1" fill="none" stroke-linejoin="round"/></svg>
<div class="a" style="left:116.00px;top:561.00px;width:66.00px;height:2.00px;background:#1a73e8"></div>
<div class="a" style="left:1249.50px;top:544.50px;width:29.00px;height:13.00px;border:1px solid #cacdd1;border-radius:2px;background:#f8f9fa"></div>
<svg class="a" style="left:1255.00px;top:547.00px" width="9" height="9" viewBox="0 0 9 9"><path d="M0.5 0.5H8.5V6.5H3L0.5 8.8Z" fill="#1a73e8"/><path d="M2 2.5H7M2 4.5H5.5" stroke="#fff" stroke-width="0.9"/></svg>
<div class="t" style="left:1268.50px;top:546.19px;font-size:11px;color:#1f1f1f">1</div>
<div class="a" style="left:1284.50px;top:545.00px;width:1.00px;height:13.00px;background:#cacdd1"></div>
<svg class="a" style="left:1294.50px;top:545.50px" width="13" height="13" viewBox="0 0 13 13"><path d="M5.19 0.64 L7.81 0.64 L8.29 2.48 L8.07 2.39 L9.71 1.43 L11.57 3.29 L10.61 4.93 L10.52 4.71 L12.36 5.19 L12.36 7.81 L10.52 8.29 L10.61 8.07 L11.57 9.71 L9.71 11.57 L8.07 10.61 L8.29 10.52 L7.81 12.36 L5.19 12.36 L4.71 10.52 L4.93 10.61 L3.29 11.57 L1.43 9.71 L2.39 8.07 L2.48 8.29 L0.64 7.81 L0.64 5.19 L2.48 4.71 L2.39 4.93 L1.43 3.29 L3.29 1.43 L4.93 2.39 L4.71 2.48Z" fill="none" stroke="#474747" stroke-width="1.2" stroke-linejoin="round"/><circle cx="6.5" cy="6.5" r="1.9" fill="#474747"/></svg>
<svg class="a" style="left:1324.00px;top:546.00px" width="4" height="12" viewBox="0 0 4 12"><circle cx="2" cy="1.7" r="1.3" fill="#474747"/><circle cx="2" cy="6" r="1.3" fill="#474747"/><circle cx="2" cy="10.3" r="1.3" fill="#474747"/></svg>
<svg class="a" style="left:1343.50px;top:547.50px" width="9" height="9" viewBox="0 0 9 9"><path d="M0.5 0.5L8.5 8.5M8.5 0.5L0.5 8.5" stroke="#474747" stroke-width="1.3"/></svg>
<div class="a" style="left:54px;top:564px;width:989px;height:183px;overflow:hidden">
<div class="a" style="left:0.00px;top:88.20px;width:989.00px;height:14.60px;background:#e0e0e0"></div>
<div class="t" style="left:2.00px;top:89.19px;font-size:11px;color:#474747;font-weight:700"><span style="letter-spacing:-0.5px">···</span></div>
<div class="a" style="left:201.50px;top:103.00px;width:1.00px;height:34.00px;background:#e0e0e0"></div>
<svg class="a" style="left:155.80px;top:6.20px" width="6" height="7" viewBox="0 0 6 7"><path d="M0 0L5.5 3.3L0 6.6Z" fill="#6e6e6e"/></svg>
<div class="m" style="left:164.10px;top:3.30px;"><span style="color:#881280">&lt;div</span> <span style="color:#994500">class=</span><span style="color:#1a1aa6">"d-flex justify-content-between p-5"</span><span style="color:#881280">></span><span class="ell"><i></i><i></i><i></i></span><span style="color:#881280">&lt;/div&gt;</span><span class="badge">flex</span></div>
<svg class="a" style="left:154.70px;top:21.27px" width="8" height="7" viewBox="0 0 8 7"><path d="M0 0H7L3.5 5.7Z" fill="#6e6e6e"/></svg>
<div class="m" style="left:164.10px;top:17.57px;"><span style="color:#881280">&lt;div</span> <span style="color:#994500">class=</span><span style="color:#1a1aa6">"h-400px scroll-y"</span><span style="color:#881280">></span></div>
<svg class="a" style="left:165.70px;top:35.54px" width="8" height="7" viewBox="0 0 8 7"><path d="M0 0H7L3.5 5.7Z" fill="#6e6e6e"/></svg>
<div class="m" style="left:175.10px;top:31.84px;"><span style="color:#881280">&lt;table</span> <span style="color:#994500">class=</span><span style="color:#1a1aa6">"table to-do-table align-middle table-row-dashed fs-6 gy-5 gs-7"</span> <span style="color:#994500">id=</span><span style="color:#1a1aa6">"example"</span><span style="color:#881280">></span></div>
<svg class="a" style="left:176.70px;top:49.81px" width="8" height="7" viewBox="0 0 8 7"><path d="M0 0H7L3.5 5.7Z" fill="#6e6e6e"/></svg>
<div class="m" style="left:186.10px;top:46.11px;"><span style="color:#881280">&lt;thead</span><span style="color:#881280">></span></div>
<svg class="a" style="left:187.70px;top:64.08px" width="8" height="7" viewBox="0 0 8 7"><path d="M0 0H7L3.5 5.7Z" fill="#6e6e6e"/></svg>
<div class="m" style="left:197.10px;top:60.38px;"><span style="color:#881280">&lt;tr</span> <span style="color:#994500">class=</span><span style="color:#1a1aa6">"text-start fw-bold fs-7 text-uppercase gs-0"</span><span style="color:#881280">></span></div>
<div class="m" style="left:208.10px;top:74.65px;"><span style="color:#881280">&lt;th</span> <span style="color:#994500">class=</span><span style="color:#1a1aa6">"min-w-80px"</span><span style="color:#881280">></span><span style="color:#222">FIELD</span><span style="color:#881280">&lt;/th&gt;</span></div>
<svg class="a" style="left:198.70px;top:92.62px" width="8" height="7" viewBox="0 0 8 7"><path d="M0 0H7L3.5 5.7Z" fill="#6e6e6e"/></svg>
<div class="m" style="left:208.10px;top:88.92px;"><span style="color:#881280">&lt;th</span> <span style="color:#994500">class=</span><span style="color:#1a1aa6">"min-w-150px"</span> <span style="color:#994500">style=</span><span style="color:#1a1aa6">"white-space: nowrap;"</span><span style="color:#881280">></span> <span style="color:#888;font-style:italic">== $0</span></div>
<div class="m" style="left:219.10px;top:103.19px;"><span style="color:#222">"ADD TO REPORT"</span></div>
<svg class="a" style="left:210.80px;top:120.36px" width="6" height="7" viewBox="0 0 6 7"><path d="M0 0L5.5 3.3L0 6.6Z" fill="#6e6e6e"/></svg>
<div class="m" style="left:219.10px;top:117.46px;"><span style="color:#881280">&lt;div</span> <span style="color:#994500">class=</span><span style="color:#1a1aa6">"menu-item py-3 flex items-center"</span><span style="color:#881280">></span><span class="ell"><i></i><i></i><i></i></span><span style="color:#881280">&lt;/div&gt;</span></div>
<div class="m" style="left:208.10px;top:131.73px;"><span style="color:#881280">&lt;/th&gt;</span></div>
<svg class="a" style="left:199.80px;top:148.90px" width="6" height="7" viewBox="0 0 6 7"><path d="M0 0L5.5 3.3L0 6.6Z" fill="#6e6e6e"/></svg>
<div class="m" style="left:208.10px;top:146.00px;"><span style="color:#881280">&lt;th</span> <span style="color:#994500">class=</span><span style="color:#1a1aa6">"min-w-150px"</span> <span style="color:#994500">style=</span><span style="color:#1a1aa6">"white-space: nowrap; width: 65px;"</span><span style="color:#881280">></span><span class="ell"><i></i><i></i><i></i></span><span style="color:#881280">&lt;/th&gt;</span></div>
<div class="m" style="left:197.10px;top:160.27px;"><span style="color:#881280">&lt;/tr&gt;</span></div>
<div class="m" style="left:186.10px;top:174.54px;"><span style="color:#881280">&lt;/thead&gt;</span></div>
</div>
<div class="a" style="left:1043.00px;top:564.00px;width:14.00px;height:183.00px;background:#f1f1f1"></div>
<svg class="a" style="left:1046.00px;top:569.00px" width="8" height="5" viewBox="0 0 8 5"><path d="M0 5L4 0L8 5Z" fill="#505050"/></svg>
<svg class="a" style="left:1046.00px;top:734.00px" width="8" height="5" viewBox="0 0 8 5"><path d="M0 0L4 5L8 0Z" fill="#505050"/></svg>
<div class="a" style="left:1044.50px;top:606.00px;width:11.00px;height:30.00px;background:#c1c1c1"></div>
<div class="a" style="left:54.00px;top:746.50px;width:1003.00px;height:1.00px;background:#cacdd1"></div>
<div class="a" style="left:54.00px;top:747.50px;width:22.00px;height:20.50px;background:#f1f3f4"></div>
<svg class="a" style="left:61.00px;top:754.00px" width="5" height="8" viewBox="0 0 5 8"><path d="M5 0V8L0 4Z" fill="#3c3c3c"/></svg>
<div class="a" style="left:947.00px;top:747.50px;width:89.00px;height:20.50px;background:#e8eaed"></div>
<div class="t" style="left:80.40px;top:751.12px;font-size:11.2px;"><span style="color:#881280">div</span><span style="color:#994500">.modal-content.</span></div>
<div class="t" style="left:184.70px;top:751.12px;font-size:11.2px;"><span style="color:#881280">div</span><span style="color:#994500">.h-400px.scroll-y</span></div>
<div class="t" style="left:290.50px;top:751.12px;font-size:11.2px;"><span style="color:#881280">table</span><span style="color:#2a3a4a">#example</span><span style="color:#994500">.table.to-do-table.align-middle.table-row-dashed.fs-6.gy-5.gs-7</span></div>
<div class="t" style="left:682.00px;top:751.12px;font-size:11.2px;"><span style="color:#881280">thead</span></div>
<div class="t" style="left:723.50px;top:751.12px;font-size:11.2px;"><span style="color:#881280">tr</span><span style="color:#994500">.text-start.fw-bold.fs-7.text-uppercase.gs-0</span></div>
<div class="t" style="left:953.00px;top:751.12px;font-size:11.2px;"><span style="color:#881280">th</span><span style="color:#994500">.min-w-150px</span></div>
<div class="a" style="left:1036.00px;top:747.50px;width:21.00px;height:20.50px;background:#f1f3f4"></div>
<svg class="a" style="left:1044.00px;top:754.00px" width="5" height="8" viewBox="0 0 5 8"><path d="M0 0V8L5 4Z" fill="#3c3c3c"/></svg>
<div class="a" style="left:1057.00px;top:564.00px;width:1.00px;height:204.00px;background:#cacdd1"></div>
<div class="a" style="left:1058.00px;top:564.00px;width:308.00px;height:23.00px;background:#f1f3f4"></div>
<div class="a" style="left:1058.00px;top:587.00px;width:308.00px;height:1.00px;background:#cacdd1"></div>
<div class="t" style="left:1066.70px;top:570.69px;font-size:11px;color:#1f1f1f">Styles</div>
<div class="t" style="left:1113.30px;top:570.69px;font-size:11px;color:#474747">Computed</div>
<div class="t" style="left:1183.20px;top:570.69px;font-size:11px;color:#474747">Layout</div>
<div class="t" style="left:1234.00px;top:570.69px;font-size:11px;color:#474747">Event Listeners</div>
<svg class="a" style="left:1321.00px;top:571.00px" width="12" height="10" viewBox="0 0 12 10"><path d="M1 1L5 5L1 9M6.5 1L10.5 5L6.5 9" stroke="#555" stroke-width="1.2" fill="none"/></svg>
<div class="a" style="left:1058.00px;top:585.00px;width:47.00px;height:2.00px;background:#1a73e8"></div>
<div class="a" style="left:1058.00px;top:588.00px;width:130.00px;height:23.00px;background:#f1f3f4"></div>
<div class="a" style="left:1058.00px;top:611.00px;width:130.00px;height:1.00px;background:#cacdd1"></div>
<div class="a" style="left:1061.00px;top:590.00px;width:5.00px;height:19.00px;background:#fff"></div>
<div class="m" style="left:1065.00px;top:593.60px;color:#444"><b>:hov</b></div>
<div class="m" style="left:1098.00px;top:593.60px;color:#444"><b>.cls</b></div>
<svg class="a" style="left:1132.00px;top:593.00px" width="15" height="15" viewBox="0 0 15 15"><path d="M6.2 0.5V12M0.5 6.2H12" stroke="#6a6a6a" stroke-width="1.4"/><path d="M10.5 14L14 10.5V14Z" fill="#555"/></svg>
<svg class="a" style="left:1157.00px;top:593.00px" width="12" height="14" viewBox="0 0 12 14"><path d="M1.5 0.8H10.5Q11.2 0.8 11.2 1.5V8.2H0.8V1.5Q0.8 0.8 1.5 0.8Z" fill="none" stroke="#555" stroke-width="1.3"/><path d="M5.5 1V4M8 1V4" stroke="#555" stroke-width="0.9"/><path d="M1 5.2H11" stroke="#555" stroke-width="1"/><rect x="4.8" y="8" width="2.4" height="5" rx="1" fill="#555"/></svg>
<div class="m" style="left:1061.40px;top:612.40px;"><span style="color:#666">element.style</span> <span style="color:#222">{</span></div>
<div class="m" style="left:1077.70px;top:627.40px;"><span style="color:#c80000">white-space</span><span style="color:#222">: </span></div>
<svg class="a" style="left:1154.00px;top:630.50px" width="6" height="7" viewBox="0 0 6 7"><path d="M0 0L5.5 3.5L0 7Z" fill="#474747"/></svg>
<div class="m" style="left:1112.00px;top:638.20px;"><span style="color:#222">nowrap;</span></div>
<div class="m" style="left:1061.40px;top:649.90px;"><span style="color:#222">}</span></div>
<div class="a" style="left:1058.00px;top:665.00px;width:117.00px;height:1.00px;background:#cacdd1"></div>
<div class="m" style="left:1061.40px;top:666.30px;"><span style="color:#222">ta</span></div>
<div class="m" style="left:1088.00px;top:666.30px;"><span style="color:#222;text-decoration:underline">custom.css:620</span></div>
<div class="m" style="left:1061.40px;top:677.00px;"><span style="color:#222">bl</span></div>
<div class="m" style="left:1061.40px;top:688.20px;"><span style="color:#222">e#example thead tr</span></div>
<div class="m" style="left:1061.40px;top:699.30px;"><span style="color:#222">th {</span></div>
<div class="m" style="left:1077.70px;top:712.00px;"><span style="color:#c80000">vertical-align</span></div>
<div class="m" style="left:1113.30px;top:723.00px;"><span style="color:#222">:</span></div>
<div class="m" style="left:1096.40px;top:734.00px;"><span style="color:#222">baseline;</span></div>
<div class="m" style="left:1061.40px;top:745.00px;"><span style="color:#222">}</span></div>
<div class="a" style="left:1058.00px;top:761.00px;width:117.00px;height:1.00px;background:#cacdd1"></div>
<div class="m" style="left:1061.40px;top:764.00px;"><span style="color:#222">.modal .... 36670</span></div>
<div class="a" style="left:1230.00px;top:764.00px;width:10.00px;height:6.00px;border:1px solid #777;border-radius:2px"></div>
<div class="a" style="left:1293.00px;top:764.00px;width:10.00px;height:6.00px;border:1px solid #777;border-radius:2px"></div>
<div class="a" style="left:1175.00px;top:588.00px;width:13.00px;height:180.00px;background:#f1f1f1"></div>
<svg class="a" style="left:1177.50px;top:592.00px" width="8" height="5" viewBox="0 0 8 5"><path d="M0 5L4 0L8 5Z" fill="#505050"/></svg>
<svg class="a" style="left:1177.50px;top:756.00px" width="8" height="5" viewBox="0 0 8 5"><path d="M0 0L4 5L8 0Z" fill="#505050"/></svg>
<div class="a" style="left:1176.50px;top:603.00px;width:10.00px;height:30.00px;background:#c1c1c1"></div>
<div class="a" style="left:1188.00px;top:588.00px;width:1.00px;height:180.00px;background:#cacdd1"></div>
<div class="a" style="left:1189.00px;top:632.00px;width:162.00px;height:83.00px;background:#fbe8b3;border-top:1px solid #000;border-bottom:1px solid #000"></div>
<div class="t" style="left:1193.00px;top:636.04px;font-size:9.4px;color:#222">border</div>
<div class="t" style="left:1267.50px;top:636.04px;font-size:9.4px;color:#222">–</div>
<div class="a" style="left:1202.20px;top:648.00px;width:135.60px;height:50.60px;background:#c3cf8a;border:1px dashed #000"></div>
<div class="t" style="left:1206.50px;top:652.13px;font-size:9.3px;color:#222">padding</div>
<div class="t" style="left:1256.60px;top:652.38px;font-size:9px;color:#222">10.400</div>
<div class="a" style="left:1234.00px;top:665.00px;width:72.00px;height:17.00px;background:#8bb5c0;border:1px solid #000"></div>
<div class="t" style="left:1237.40px;top:669.50px;font-size:9.1px;color:#222">130.500×59.376</div>
<div class="t" style="left:1194.00px;top:669.24px;font-size:9.4px;color:#222">–</div>
<div class="t" style="left:1340.00px;top:669.24px;font-size:9.4px;color:#222">–</div>
<div class="t" style="left:1208.40px;top:669.58px;font-size:9px;color:#222">9.750</div>
<div class="t" style="left:1309.00px;top:669.58px;font-size:9px;color:#222">9.750</div>
<div class="t" style="left:1256.60px;top:685.38px;font-size:9px;color:#222">10.400</div>
<div class="t" style="left:1259.00px;top:701.38px;font-size:9px;color:#222">1.250</div>
<div class="a" style="left:1189.00px;top:759.00px;width:162.00px;height:1.00px;background:#cacdd1"></div>
<div class="a" style="left:1351.50px;top:588.00px;width:14.50px;height:180.00px;background:#f1f1f1"></div>
<svg class="a" style="left:1355.00px;top:592.00px" width="8" height="5" viewBox="0 0 8 5"><path d="M0 5L4 0L8 5Z" fill="#505050"/></svg>
<svg class="a" style="left:1355.00px;top:756.00px" width="8" height="5" viewBox="0 0 8 5"><path d="M0 0L4 5L8 0Z" fill="#505050"/></svg>
<div class="a" style="left:1353.00px;top:603.00px;width:11.00px;height:30.00px;background:#c1c1c1"></div>
</div><!--/DEV-->
</body></html>
